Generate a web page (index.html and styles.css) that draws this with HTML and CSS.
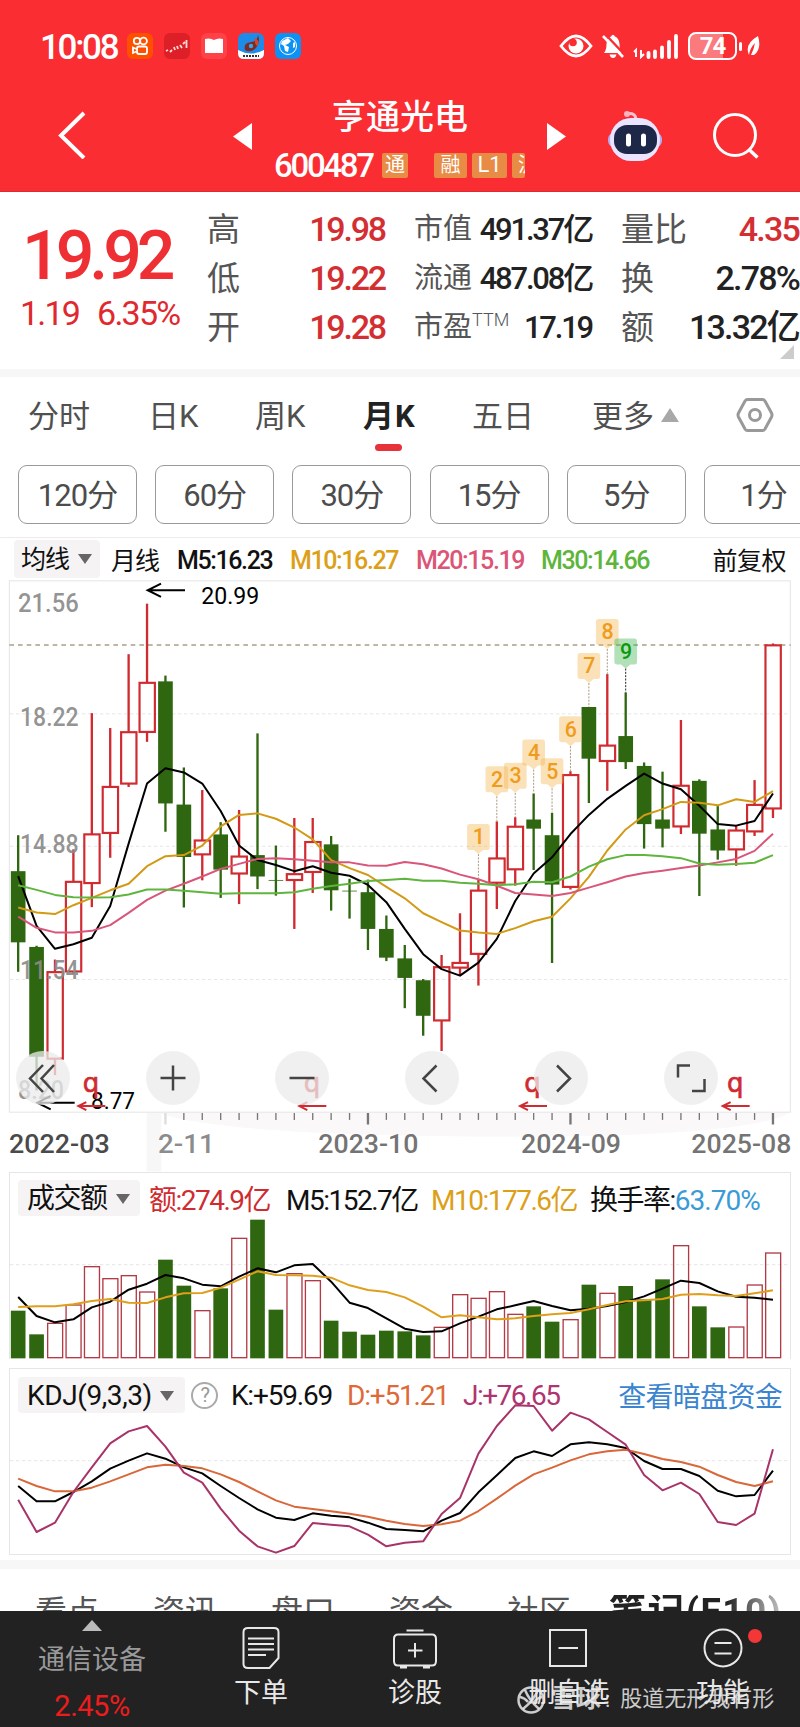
FILE: index.html
```html
<!DOCTYPE html>
<html lang="zh-CN">
<head>
    <meta charset="UTF-8">
    <meta name="viewport" content="width=device-width, initial-scale=1.0">
    <title>亨通光电 600487</title>
    <link rel="stylesheet" href="styles.css">
</head>
<body>

    <header>
        <div class="status-bar">
            <span class="clock">10:08</span>
            <div class="app-icons">
                <svg viewBox="0 0 26 26"><rect width="26" height="26" rx="6" fill="#ff5000"/><g fill="none" stroke="#fff" stroke-width="1.8"><circle cx="10" cy="8" r="3.2"/><circle cx="16.5" cy="8" r="3.4"/><rect x="10" y="13.500" width="10" height="7.500" rx="2"/><path d="M9.500 16 L6 14.500 V20 L9.500 18.500"/></g></svg>
                <svg viewBox="0 0 26 26"><rect width="26" height="26" rx="6" fill="#dd2027"/><path d="M2 18 L4 17 M6 19 L8 17 M10 14 L11 17 M13 13 L14 16 M16 12 L18 15 M19 11 L21 9 M22.500 7 V15" fill="none" stroke="#ffd9d9" stroke-width="1.800"/></svg>
                <svg viewBox="0 0 26 26"><rect width="26" height="26" rx="6" fill="#ff4148"/><path d="M4 6 Q9 4.500 13 7 Q17 4.500 22 6 V20 H4 Z" fill="#fff"/></svg>
                <svg viewBox="0 0 26 26"><rect width="26" height="26" rx="6" fill="#1f8be8"/><path d="M0 17 Q13 24 26 17 V20 Q26 26 20 26 H6 Q0 26 0 20 Z" fill="#fff"/><path d="M20 2 Q23 9 17 16 Q12 20 7 17 Q5 10 13 9 Q19 9 20 2" fill="#7c2c22"/><path d="M17 5 Q23 8 19 13 Q16 11 17 5" fill="#d9442e"/><circle cx="13" cy="13" r="2.200" fill="#35a5ee"/><path d="M5 23 H21" stroke="#333" stroke-width="2" stroke-dasharray="2 1"/></svg>
                <svg viewBox="0 0 26 26"><rect width="26" height="26" rx="6" fill="#0c92f5"/><circle cx="13" cy="13" r="8.500" fill="none" stroke="#fff" stroke-width="1"/><path d="M7 8 L13 5 L16 8 L13 11 L10 12 L14 14 L13 19 L10 18 L9 13 L6 11 Z M18 10 L20 9 L20 14 L18 15 Z" fill="#fff"/></svg>
            </div>
            <div class="sys-icons">
                <svg class="eye" viewBox="0 0 34 24"><path d="M2 12 Q17 -8 32 12 Q17 32 2 12 Z" fill="none" stroke="#fff" stroke-width="2.800"/><circle cx="17" cy="12" r="7.500" fill="#fff"/><circle cx="14" cy="8.500" r="3.800" fill="#fa2d33"/></svg>
                <svg class="bell" viewBox="0 0 22 26"><path d="M2 20 H20 Q17.500 17 17.500 11 Q17 5 13 3.500 Q11 0 9 3.500 Q4.500 5 4.500 11 Q4.500 17 2 20 Z M7.500 21.500 H14.500 Q13.500 25 11 25 Q8.500 25 7.500 21.500" fill="#fff"/><path d="M3 1 L23 22" stroke="#fa2d33" stroke-width="2.500"/><path d="M1 3 L21 24" stroke="#fff" stroke-width="2.600"/></svg>
                <svg class="signal" viewBox="0 0 46 26"><path d="M3 24 V17 L1 19 M8 17 V24 L11 21" fill="none" stroke="#fff" stroke-width="2"/><path d="M15.500 20 V24 M22 18.500 V24 M29 14.500 V24 M36 9 V24 M43 3 V24" stroke="#fff" stroke-width="3.800" stroke-linecap="round"/></svg>
                <div class="battery"><span>74</span></div>
                <svg class="leaf" viewBox="0 0 14 22"><path d="M12 1 Q16 14 8 20 L5 20 Q8 14 9 8 Q4 13 3 20 Q-2 9 12 1 Z" fill="#fff"/></svg>
            </div>
        </div>

        <div class="title-bar">
            <svg class="back" viewBox="0 0 28 48"><path d="M26 2 L3 24.500 L26 47" fill="none" stroke="#fff" stroke-width="4"/></svg>
            <svg class="tri" viewBox="0 0 19 27"><path d="M19 0 V27 L0 13.500 Z" fill="#fff"/></svg>
            <div class="stock">
                <div class="name">亨通光电</div>
                <div class="code-row">
                    <span class="code">600487</span>
                    <span class="mark first">通</span>
                    <span class="mark">融</span>
                    <span class="mark l1">L1</span>
                    <span class="mark cut">沪</span>
                </div>
            </div>
            <svg class="tri right" viewBox="0 0 19 27"><path d="M0 0 V27 L19 13.500 Z" fill="#fff"/></svg>
            <svg class="robot" viewBox="0 0 56 52">
                <path d="M20 4 Q28 2 29 9" fill="none" stroke="#ffc4d4" stroke-width="3"/>
                <circle cx="20" cy="4" r="3" fill="#ffb3c0"/>
                <rect x="1" y="23" width="54" height="14" rx="6" fill="#b9a8f2"/>
                <rect x="3" y="8" width="50" height="43" rx="21" fill="#e9e4ff"/>
                <rect x="7" y="15" width="43" height="29" rx="13" fill="#1d2848"/>
                <path d="M21.500 26 V34 M36.500 26 V34" stroke="#fff" stroke-width="5" stroke-linecap="round"/>
            </svg>
            <svg class="search" viewBox="0 0 46 46"><circle cx="22" cy="22" r="20.500" fill="none" stroke="#fff" stroke-width="3"/><path d="M36.500 37 L44.500 44.500" stroke="#fff" stroke-width="3.500"/></svg>
        </div>
    </header>

    <section class="quote">
        <div class="price">
            <div class="last">19.92</div>
            <div class="change"><span>1.19</span><span>6.35%</span></div>
        </div>
        <div class="col col-a">
            <div><label>高</label><b class="up">19.98</b></div>
            <div><label>低</label><b class="up">19.22</b></div>
            <div><label>开</label><b class="up">19.28</b></div>
        </div>
        <div class="col col-b">
            <div><label>市值</label><b>491.37亿</b></div>
            <div><label>流通</label><b>487.08亿</b></div>
            <div><label>市盈<sup>TTM</sup></label><b>17.19</b></div>
        </div>
        <div class="col col-c">
            <div><label>量比</label><b class="up">4.35</b></div>
            <div><label>换</label><b>2.78%</b></div>
            <div><label>额</label><b>13.32亿</b></div>
        </div>
        <i class="corner"></i>
    </section>

    <nav class="period">
        <span>分时</span>
        <span>日K</span>
        <span>周K</span>
        <span class="active">月K</span>
        <span>五日</span>
        <span>更多<i class="tri-up"></i></span>
        <svg viewBox="0 0 38 36"><path d="M11.500 2.500 H26.500 Q28 2.500 29 4 L35.500 16 Q36.500 18 35.500 20 L29 32 Q28 33.500 26.500 33.500 H11.500 Q10 33.500 9 32 L2.500 20 Q1.500 18 2.500 16 L9 4 Q10 2.500 11.500 2.500 Z" fill="none" stroke="#999" stroke-width="3"/><circle cx="19" cy="18" r="5.500" fill="none" stroke="#999" stroke-width="3"/></svg>
    </nav>

    <div class="minutes">
        <button>120分</button>
        <button>60分</button>
        <button>30分</button>
        <button>15分</button>
        <button>5分</button>
        <button>1分</button>
    </div>

    <div class="legend">
        <span class="select">均线<i class="tri-down"></i></span>
        <span class="type">月线</span>
        <span class="m5">M5:16.23</span>
        <span class="m10">M10:16.27</span>
        <span class="m20">M20:15.19</span>
        <span class="m30">M30:14.66</span>
        <span class="adjust">前复权</span>
    </div>

    <div class="main-chart">
        <!-- K线图 -->
        <svg id="kline" viewBox="0 30 2400 1776"></svg>
        <div class="tools">
            <button><svg viewBox="0 0 54 54"><path d="M27 14 L14 27.500 L27 41 M38 14 L25.500 27.500 L38 41"/></svg></button>
            <button><svg viewBox="0 0 54 54"><path d="M14.500 27 H39.500 M27 14.500 V39.500"/></svg></button>
            <button><svg viewBox="0 0 54 54"><path d="M14.500 27 H39.500"/></svg></button>
            <button><svg viewBox="0 0 54 54"><path d="M31.500 14.500 L18.500 27.500 L31.500 40.500"/></svg></button>
            <button><svg viewBox="0 0 54 54"><path d="M23 14.500 L36 27.500 L23 40.500"/></svg></button>
            <button><svg viewBox="0 0 54 54"><path d="M14 26.500 V14.500 H26 M28 40 H40.500 V28"/></svg></button>
        </div>
    </div>

    <div class="pane volume">
        <div class="pane-head">
            <span class="select">成交额<i class="tri-down"></i></span>
            <span class="amt">额:274.9亿</span>
            <span class="m5">M5:152.7亿</span>
            <span class="m10">M10:177.6亿</span>
            <span class="rate">换手率:<em>63.70%</em></span>
        </div>
        <svg id="vol" viewBox="27 38 2346 560"></svg>
    </div>

    <div class="pane kdj">
        <div class="pane-head">
            <span class="select">KDJ(9,3,3)<i class="tri-down"></i></span>
            <span class="help">?</span>
            <span class="k">K:+59.69</span>
            <span class="d">D:+51.21</span>
            <span class="j">J:+76.65</span>
            <span class="fund">查看暗盘资金</span>
        </div>
        <svg id="kdj" viewBox="27 24 2346 560"></svg>
    </div>

    <nav class="info-tabs">
        <span>看点</span>
        <span>资讯</span>
        <span>盘口</span>
        <span>资金</span>
        <span>社区</span>
        <span class="active">笔记(F10)</span>
    </nav>

    <footer>
        <div class="sector">
            <i class="tri-up"></i>
            <span>通信设备</span>
            <b>2.45%</b>
        </div>
        <div class="item">
            <svg viewBox="0 0 44 44"><path d="M9 2 H35 Q39.500 2 39.500 6 V32 L30.500 42 H9 Q4.500 42 4.500 38 V6 Q4.500 2 9 2 Z M9 12.500 H35 M9 18 H35 M9 23.500 H35 M9 29 H27"/></svg>
            <span>下单</span>
        </div>
        <div class="item">
            <svg viewBox="0 0 44 44"><path d="M5 8.500 H39 Q43 8.500 43 13 V35 Q43 39.500 39 39.500 H5 Q1 39.500 1 35 V13 Q1 8.500 5 8.500 Z M13.500 4.500 H30.500 M22 17 V31.500 M15 24.500 H29.500 M7 41.500 H14 M30 41.500 H37"/></svg>
            <span>诊股</span>
        </div>
        <div class="item">
            <svg viewBox="0 0 44 44"><path d="M3 4 H39 V40 H3 Z M11.500 22 H31"/></svg>
            <span>删自选</span>
        </div>
        <div class="item">
            <svg viewBox="0 0 44 44"><circle cx="22" cy="22" r="18.500"/><path d="M13.500 17 H30.500 M13.500 27.500 H30.500"/></svg>
            <span>功能</span>
            <i class="dot"></i>
        </div>
        <div class="watermark">
            <svg viewBox="0 0 28 28"><circle cx="14" cy="14" r="12.500"/><path d="M8 4 Q12 14 22 23 M21 4 Q17 14 6 23 M3 11 Q8 12 11 16 M25 11 Q20 12 17 16"/></svg>
            <span class="site">雪球</span><span class="sep">:</span><span>股道无形我有形</span>
        </div>
    </footer>

    <script>
        const RED = '#cf2b30';
        const GREEN = '#2f6610';
        const X0 = 54.5;
        const STEP = 55.23;
        const px = i => X0 + i * STEP;
        // K线图的纵向比例
        const py = y => +(y * 1.148).toFixed(1);

        // 最高, 实体上沿, 实体下沿, 最低, 涨跌
        const candles = [
            [693, 787, 973, 1050, 0], [982, 985, 1272, 1360, 0], [1018, 1050, 1278, 1320, 1], [730, 814, 1050, 1055, 1],
            [374, 690, 819, 881, 1], [413, 566, 688, 752, 1], [220, 423, 559, 567, 1], [88, 294, 424, 449, 1],
            [276, 291, 610, 684, 0], [516, 613, 750, 882, 0], [575, 706, 744, 811, 1], [659, 691, 783, 857, 0],
            [627, 748, 794, 873, 1], [427, 745, 801, 834, 0], [720, 810, 812, 851, 0], [648, 794, 811, 938, 1],
            [648, 710, 790, 844, 1], [695, 717, 837, 890, 0], [807, 838, 840, 911, 0], [809, 842, 938, 993, 0],
            [903, 938, 1013, 1022, 0], [980, 1015, 1066, 1145, 0], [1069, 1072, 1165, 1217, 0], [1006, 1037, 1178, 1257, 1],
            [897, 1026, 1040, 1060, 1], [810, 837, 1004, 1086, 1], [657, 753, 818, 886, 1], [646, 670, 783, 825, 1],
            [584, 652, 676, 784, 0], [635, 693, 822, 1027, 0], [526, 535, 829, 835, 1], [358, 358, 493, 609, 0],
            [272, 458, 500, 577, 1], [320, 434, 502, 520, 0], [503, 512, 664, 728, 0], [527, 652, 676, 725, 0],
            [392, 563, 671, 690, 1], [547, 551, 689, 852, 0], [617, 678, 733, 757, 0], [668, 680, 731, 773, 1],
            [549, 613, 684, 695, 1], [192, 196, 624, 648, 1]
        ];
        const ma5 = [800, 930, 990, 978, 961, 878, 715, 558, 518, 529, 558, 630, 720, 758, 771, 787, 774, 791, 799, 823, 868, 938, 1004, 1043, 1060, 1026, 964, 865, 793, 751, 690, 640, 598, 564, 532, 558, 573, 616, 664, 668, 656, 584];
        const ma10 = [882, 895, 899, 876, 857, 837, 820, 774, 748, 745, 720, 670, 640, 636, 650, 673, 704, 758, 779, 797, 828, 858, 897, 920, 942, 947, 951, 936, 918, 906, 858, 802, 733, 678, 641, 625, 606, 608, 615, 599, 606, 578];
        const ma20 = [906, 935, 947, 947, 943, 928, 896, 862, 838, 820, 801, 781, 768, 755, 753, 756, 760, 764, 764, 772, 773, 763, 769, 780, 796, 808, 825, 844, 848, 852, 844, 830, 816, 801, 792, 786, 779, 772, 764, 755, 734, 689];
        const ma30 = [824, 836, 849, 855, 856, 855, 848, 835, 835, 838, 842, 846, 845, 845, 845, 842, 833, 826, 820, 813, 810, 807, 812, 812, 817, 820, 824, 821, 815, 816, 801, 775, 756, 745, 745, 748, 753, 767, 770, 768, 765, 745];

        const volTop = [454, 525, 492, 437, 322, 358, 349, 398, 301, 379, 454, 387, 237, 181, 451, 343, 364, 484, 517, 526, 514, 516, 528, 504, 406, 417, 397, 465, 441, 487, 481, 376, 402, 380, 420, 360, 259, 441, 504, 503, 377, 281];
        const vol5 = [413, 470, 489, 480, 444, 427, 391, 373, 347, 357, 376, 381, 352, 327, 339, 318, 314, 367, 430, 446, 477, 508, 518, 516, 492, 472, 450, 438, 425, 440, 453, 448, 440, 428, 411, 388, 364, 371, 396, 412, 415, 421];
        const vol10 = [443, 441, 441, 435, 425, 419, 430, 431, 414, 402, 401, 385, 361, 336, 347, 348, 349, 355, 378, 392, 398, 414, 442, 474, 468, 474, 480, 477, 470, 465, 461, 450, 437, 426, 423, 419, 406, 404, 408, 410, 402, 393];

        const kLine = [378, 424, 424, 396, 364, 326, 302, 280, 296, 322, 340, 378, 414, 448, 473, 480, 460, 467, 472, 488, 507, 510, 514, 482, 459, 397, 346, 294, 274, 288, 253, 247, 253, 264, 303, 327, 327, 348, 392, 409, 405, 332];
        const dLine = [356, 378, 394, 394, 383, 364, 343, 322, 314, 318, 325, 343, 366, 394, 421, 440, 447, 454, 461, 470, 482, 492, 498, 493, 482, 453, 416, 377, 343, 323, 301, 283, 274, 269, 282, 297, 306, 320, 345, 366, 378, 364];
        const jLine = [419, 516, 488, 396, 322, 250, 214, 198, 260, 338, 368, 446, 512, 559, 578, 558, 489, 494, 499, 524, 559, 548, 544, 462, 414, 281, 198, 136, 138, 212, 158, 178, 216, 254, 345, 391, 368, 402, 486, 495, 461, 268];

        function line(x1, y1, x2, y2, color, width, dash) {
            return `<line x1="${x1}" y1="${y1}" x2="${x2}" y2="${y2}" stroke="${color}" stroke-width="${width}"${dash ? ` stroke-dasharray="${dash}"` : ''}/>`;
        }

        function poly(data, color, width = 5) {
            return `<polyline points="${data.map((y, i) => px(i) + ',' + y).join(' ')}" fill="none" stroke="${color}" stroke-width="${width}" stroke-linejoin="round"/>`;
        }

        function label(text, x, y, width, size, color, extra = '') {
            return `<text x="${x}" y="${y}" font-size="${size}" fill="${color}" textLength="${width}" lengthAdjust="spacingAndGlyphs" ${extra}>${text}</text>`;
        }

        function arrow(x1, x2, y, color, head, width) {
            return `<path d="M${x2} ${y} H${x1} M${x1 + head * 2} ${y - head} L${x1} ${y} L${x1 + head * 2} ${y + head}" fill="none" stroke="${color}" stroke-width="${width}"/>`;
        }

        function drawKline() {
            let s = '';
            // 坐标轴下方的浅色底
            s += '<rect x="440" y="1628" width="44" height="176" fill="#f7f7f8"/>';
            s += '<path d="M484 1628 H2370 Q2250 1695 1600 1700 Q700 1700 484 1632 Z" fill="#faf8f8"/>';
            s += '<rect x="28" y="32.500" width="2343" height="1594" fill="none" stroke="#e4e4e4" stroke-width="3"/>';
            [376, 722, 1070].forEach(y => s += line(30, py(y), 2370, py(y), '#e6e6e6', 3, '10 8'));
            s += line(28, py(196), 2372, py(196), '#a9a184', 5, '14 12');

            candles.forEach((row, i) => {
                const [h, t, b, l] = row.slice(0, 4).map(py);
                const x = px(i);
                const c = row[4] ? RED : GREEN;
                if (row[4]) {
                    s += line(x, h, x, t, c, 7) + line(x, b, x, l, c, 7);
                    s += `<rect x="${x - 22.5}" y="${t + 1}" width="46" height="${b - t - 2}" fill="none" stroke="${c}" stroke-width="6.500"/>`;
                } else {
                    s += line(x, h, x, l, c, 7);
                    s += `<rect x="${x - 22}" y="${t}" width="44" height="${b - t}" fill="${c}"/>`;
                }
            });

            s += poly(ma5.map(py), '#000', 6) + poly(ma10.map(py), '#d29a15', 6) + poly(ma20.map(py), '#d9567a', 6) + poly(ma30.map(py), '#5fb53d', 6);

            [['21.56', 111, 182], ['18.22', 407, 176], ['14.88', 739, 176], ['11.54', 1068, 176], ['8.20', 1382, 138]].forEach(([t, y, w]) => {
                s += label(t, w === 176 ? 60 : 54, py(y), w, 78, '#8a8a8a', 'fill-opacity=".92" font-weight="500"');
            });
            s += label('20.99', 604, py(89), 174, 70, '#000');
            s += arrow(443, 555, py(53), '#000', 20, 6);
            s += arrow(112, 224, py(1392), '#000', 20, 6);
            s += label('8.77', 273, py(1408), 132, 70, '#000');

            // 九转序列
            [664, 513, 504, 443, 492, 382, 217, 128, 179].forEach((top, n) => {
                const i = 25 + n;
                const x = px(i);
                const y = py(top);
                const last = n === 8;
                s += line(x, y + 90, x, py(candles[i][0]), last ? '#222' : '#a89a80', 3, '6 4');
                s += `<path d="M${x - 26} ${y} H${x + 26} Q${x + 34} ${y} ${x + 34} ${y + 8} V${y + 70} Q${x + 34} ${y + 78} ${x + 26} ${y + 78} H${x + 14} L${x} ${y + 90} L${x - 14} ${y + 78} H${x - 26} Q${x - 34} ${y + 78} ${x - 34} ${y + 70} V${y + 8} Q${x - 34} ${y} ${x - 26} ${y} Z" fill="${last ? '#3db24f' : '#f5b44a'}" fill-opacity=".4"/>`;
                s += `<text x="${x + 1}" y="${y + 61}" font-size="64" font-weight="500" text-anchor="middle" fill="${last ? '#0b9a0b' : '#ef9c1c'}">${n + 1}</text>`;
            });

            [235, 898, 1560, 2168].forEach(x => {
                s += `<text x="${x + 13}" y="${py(1364)}" class="q">q</text>`;
                s += arrow(x, x + 81, py(1401), RED, 12, 6);
            });

            for (let i = 8; i < 42; i++) {
                const major = (i - 8) % 11 === 0;
                s += line(px(i), py(1419), px(i), py(major ? 1449 : 1437), i === 8 ? '#ddd' : '#777', major ? 7 : 4);
            }
            s += label('2022-03', 27, py(1523), 302, 76, '#4a4a4a', 'font-weight="500"');
            s += label('2-11', 474, py(1523), 170, 76, '#8c8c8c', 'font-weight="500"');
            s += label('2023-10', 955, py(1523), 300, 76, '#747474', 'font-weight="500"');
            s += label('2024-09', 1563, py(1523), 300, 76, '#747474', 'font-weight="500"');
            s += label('2025-08', 2074, py(1523), 300, 76, '#747474', 'font-weight="500"');
            document.getElementById('kline').innerHTML = s;
        }

        function drawVolume() {
            let s = line(30, 316, 2370, 316, '#e6e6e6', 3, '10 8');
            volTop.forEach((y, i) => {
                const x = px(i);
                if (candles[i][4]) {
                    s += `<rect x="${x - 22}" y="${y}" width="45" height="${595 - y}" fill="none" stroke="#b23a44" stroke-width="4"/>`;
                } else {
                    s += `<rect x="${x - 22}" y="${y}" width="44" height="${597 - y}" fill="${GREEN}"/>`;
                }
            });
            s += poly(vol5, '#000', 6) + poly(vol10, '#dea01c', 6);
            document.getElementById('vol').innerHTML = s;
        }

        function drawKdj() {
            document.getElementById('kdj').innerHTML = line(30, 302, 2370, 302, '#e6e6e6', 3, '10 8')
                + poly(kLine, '#000', 6) + poly(dLine, '#d9673a', 6) + poly(jLine, '#a83368', 6);
        }

        drawKline();
        drawVolume();
        drawKdj();
    </script>

</body>
</html>
```
FILE: styles.css
```css
* {
    box-sizing: border-box;
}

body {
    margin: 0;
    width: 800px;
    height: 1727px;
    overflow: hidden;
    background-color: #fff;
    color: #222;
    font-family: Roboto, "Noto Sans CJK SC", sans-serif;
}

svg {
    display: block;
    flex: none;
}

i, em {
    font-style: normal;
}

button {
    font-family: inherit;
    padding: 0;
}

header {
    height: 192px;
    background-color: #fa2d33;
    color: #fff;
    border-bottom: 1px solid #d92c33;
}

.status-bar {
    display: flex;
    align-items: center;
    height: 92px;
    padding: 0 40px;
}

.clock {
    width: 87px;
    padding-top: 2px;
    font-size: 35px;
    font-weight: 500;
    letter-spacing: -2.300px;
}

.app-icons {
    display: flex;
    gap: 11px;
}

.app-icons svg {
    width: 26px;
    height: 26px;
}

.sys-icons {
    display: flex;
    align-items: center;
    margin-left: auto;
}

.eye {
    width: 34px;
    height: 24px;
}

.bell {
    width: 22px;
    height: 26px;
    margin-left: 9px;
}

.signal {
    width: 46px;
    height: 26px;
    margin-left: 9px;
}

.battery {
    position: relative;
    width: 49px;
    height: 28px;
    margin: 0 13px 0 9px;
    border: 2px solid #fff;
    border-radius: 8px;
    background: linear-gradient(to right, #fb7a7e 74%, transparent 74%);
    text-align: center;
    font-size: 24px;
    font-weight: 700;
    line-height: 25px;
    letter-spacing: -1px;
}

.battery::after {
    content: "";
    position: absolute;
    right: -7px;
    top: 8px;
    width: 3px;
    height: 9px;
    border-radius: 2px;
    background-color: #fff;
}

.leaf {
    width: 14px;
    height: 22px;
    margin-left: -4px;
}

.title-bar {
    display: flex;
    height: 100px;
    padding-left: 58px;
}

.back {
    width: 28px;
    height: 48px;
    margin-top: 19px;
}

.tri {
    width: 19px;
    height: 27px;
    margin: 31px 0 0 147px;
}

.stock {
    width: 250px;
    margin-left: 23px;
}

.name {
    height: 50px;
    line-height: 51px;
    text-align: center;
    font-size: 34px;
    font-weight: 500;
}

.code-row {
    display: flex;
    align-items: center;
    height: 46px;
    overflow: hidden;
}

.code {
    width: 107px;
    font-size: 33px;
    font-weight: 500;
    letter-spacing: -2.300px;
    text-indent: -1px;
}

.mark {
    flex: none;
    width: 33px;
    height: 25px;
    margin-right: 5px;
    border-radius: 2px;
    background-color: #e88b45;
    text-align: center;
    font-size: 20px;
    line-height: 24px;
}

.mark.first {
    width: 26px;
    margin-right: 26px;
}

.mark.l1 {
    width: 35px;
    font-size: 22px;
}

.mark.cut {
    width: 13px;
    margin-right: 0;
    padding-left: 6px;
    overflow: hidden;
    text-align: left;
}

.tri.right {
    margin-left: 22px;
}

.robot {
    width: 56px;
    height: 52px;
    margin: 18px 0 0 41px;
}

.search {
    width: 46px;
    height: 46px;
    margin: 21px 0 0 50px;
}

.quote {
    position: relative;
    display: flex;
    height: 185px;
    padding-top: 13px;
    border-bottom: 8px solid #f7f7f7;
}

.price {
    width: 207px;
    color: #e0282e;
}

.last {
    padding: 17px 0 0 22px;
    font-size: 68px;
    line-height: 68px;
    font-weight: 500;
    letter-spacing: -5px;
    color: #ee2f33;
}

.change {
    display: flex;
    gap: 18px;
    padding: 6px 0 0 20px;
    font-size: 34px;
    line-height: 34px;
    letter-spacing: -1.800px;
}

.col > div {
    display: flex;
    justify-content: space-between;
    align-items: center;
    height: 49px;
    white-space: nowrap;
}

.col label {
    color: #555;
    font-size: 33px;
    line-height: 49px;
}

.col b {
    font-size: 34px;
    font-weight: 500;
    line-height: 49px;
    letter-spacing: -2.2px;
}

.col b.up {
    color: #d32f33;
}

.col-a {
    width: 178px;
}

.col-b {
    width: 178px;
    margin-left: 29px;
}

.col-b label {
    font-size: 29px;
}

.col-b b {
    font-size: 31px;
    letter-spacing: -2.200px;
}

.col sup {
    font-size: 18px;
    line-height: 0;
    font-weight: 300;
}

.col-c {
    width: 178px;
    margin-left: 29px;
}

.col-c b {
    letter-spacing: -1.800px;
}

.corner {
    position: absolute;
    right: 6px;
    bottom: 10px;
    border: 7px solid transparent;
    border-right-color: #ccc;
    border-bottom-color: #ccc;
}

.period {
    display: flex;
    align-items: center;
    height: 78px;
    padding: 0 0 6px 28px;
    font-size: 31px;
    color: #505050;
}

.period span {
    position: relative;
    width: 120px;
    white-space: nowrap;
}

.period span:nth-child(2) {
    width: 107px;
}

.period span:nth-child(3) {
    width: 108px;
}

.period span:nth-child(4) {
    width: 109px;
}

.period span:nth-child(6) {
    width: 144px;
}

.period .active {
    font-weight: 700;
    color: #222;
    letter-spacing: 1px;
}

.period .active::after {
    content: "";
    position: absolute;
    left: 12px;
    bottom: -15px;
    width: 27px;
    height: 7px;
    border-radius: 4px;
    background-color: #e63238;
}

.tri-up {
    display: inline-block;
    border: 9px solid transparent;
    border-top: 0;
    border-bottom: 14px solid #a8a8a8;
}

.period .tri-up {
    margin: 0 0 5px 7px;
}

.period svg {
    width: 38px;
    height: 36px;
    margin-top: 4px;
}

.minutes {
    display: flex;
    gap: 18.2px;
    height: 83px;
    padding: 10px 0 0 18px;
    overflow: hidden;
    border-bottom: 1px solid #ececec;
}

.minutes button {
    flex: none;
    width: 119px;
    height: 59px;
    padding-bottom: 4px;
    border: 1px solid #999;
    border-radius: 9px;
    background-color: #fff;
    color: #4c4c4c;
    font-size: 31px;
    letter-spacing: -1px;
}

.legend {
    display: flex;
    align-items: center;
    height: 42px;
    padding-left: 14px;
    color: #111;
    font-size: 25px;
    white-space: nowrap;
}

.legend span {
    padding-top: 2px;
    letter-spacing: -1.300px;
}

.legend .select {
    width: 86px;
    height: 38px;
    padding: 0 0 0 7px;
    border-radius: 4px;
    background-color: #f6f3f4;
    line-height: 40px;
    letter-spacing: -1px;
}

.tri-down {
    display: inline-block;
    border: 7px solid transparent;
    border-bottom: 0;
    border-top: 10px solid #666;
    margin: 0 0 4px 9px;
}

.legend .type {
    width: 67px;
    padding: 0 0 0 11px;
    letter-spacing: -1px;
}

.legend .m5 {
    width: 123px;
    padding-left: 10px;
}

.legend .m10 {
    width: 126px;
}

.legend .m20 {
    width: 125px;
}

.legend .m5, .legend .m10, .legend .m20, .legend .m30 {
    font-weight: 500;
    letter-spacing: -1.400px;
}

.m5 {
    color: #111;
}

.m10 {
    color: #dca018;
}

.m20 {
    color: #dc5476;
}

.m30 {
    color: #5eb53c;
}

.legend .adjust {
    margin-left: auto;
    margin-right: 14px;
    padding-top: 0;
    letter-spacing: -.500px;
}

.main-chart {
    position: relative;
    height: 592px;
}

.main-chart > svg {
    width: 800px;
    height: 592px;
}

.q {
    fill: #cf2b30;
    font-family: "DejaVu Sans", sans-serif;
    font-size: 78px;
    stroke: #cf2b30;
    stroke-width: 2;
}

.tools {
    position: absolute;
    left: 16px;
    top: 471px;
    display: flex;
    gap: 75.600px;
}

.tools button {
    width: 54px;
    height: 54px;
    border: 0;
    border-radius: 50%;
    background-color: rgba(235, 235, 235, .76);
}

.tools svg {
    fill: none;
    stroke: #444;
    stroke-width: 2.500;
}

.pane {
    position: relative;
    width: 782px;
    height: 187px;
    margin: 0 9px 9px;
    border: 1px solid #e6e6e6;
}

.pane > svg {
    width: 782px;
    height: 186.700px;
    margin: -1px 0 0 -1px;
}

.pane-head {
    position: absolute;
    left: 8px;
    right: 8px;
    top: 8px;
    display: flex;
    align-items: center;
    height: 36px;
    font-size: 28px;
    white-space: nowrap;
    letter-spacing: -1.500px;
    color: #111;
}

.pane-head .select {
    height: 36px;
    padding-left: 9px;
    border-radius: 4px;
    background-color: #f6f3f4;
    line-height: 37px;
}

.volume .pane-head {
    top: 7px;
}

.volume .select {
    width: 122px;
    margin-right: 9px;
}

.volume {
    border-bottom: 0;
}

.amt {
    width: 137px;
    color: #cf2b30;
}

.volume .m5 {
    width: 145px;
}

.volume .m10 {
    width: 159px;
}

.rate em {
    color: #3a9bd6;
    letter-spacing: -1px;
}

.kdj .select {
    width: 167px;
    margin-right: 6px;
    letter-spacing: -.400px;
}

.kdj .tri-down {
    margin-left: 8px;
}

.help {
    width: 27px;
    height: 27px;
    margin-right: 13px;
    border: 2px solid #aaa;
    border-radius: 50%;
    color: #999;
    font-size: 20px;
    line-height: 23px;
    text-align: center;
}

.k {
    width: 116px;
    letter-spacing: -1.200px;
}

.d {
    width: 116px;
    color: #de6a38;
    letter-spacing: -1.200px;
}

.j {
    color: #b03470;
}

.fund {
    margin-left: auto;
    color: #3b84d0;
    letter-spacing: -.700px;
}

.info-tabs {
    display: flex;
    height: 51px;
    margin-top: -4px;
    padding: 26px 0 0 35px;
    border-top: 9px solid #f7f7f7;
    overflow: hidden;
    color: #555;
    font-size: 32px;
    line-height: 34px;
    white-space: nowrap;
}

.info-tabs span {
    flex: none;
    width: 118px;
}

.info-tabs span:nth-child(5) {
    width: 102px;
}

.info-tabs .active {
    width: 180px;
    font-size: 37px;
    font-weight: 700;
    letter-spacing: 1.500px;
    color: #222;
    -webkit-mask-image: linear-gradient(to right, #000 65%, rgba(0, 0, 0, .3) 95%);
    mask-image: linear-gradient(to right, #000 65%, rgba(0, 0, 0, .3) 95%);
}

footer {
    position: relative;
    display: flex;
    height: 116px;
    background-color: #222;
    color: #e8e8e8;
}

.sector {
    display: flex;
    flex-direction: column;
    align-items: center;
    width: 184px;
    padding-top: 9px;
}

.sector .tri-up {
    border-width: 0 10px 11px;
    border-bottom-color: #bbb;
}

.sector span {
    margin-top: 11px;
    color: #999;
    font-size: 27px;
    line-height: 36px;
}

.sector b {
    margin-top: 10px;
    color: #ee1c1c;
    font-size: 29px;
    font-weight: 400;
    line-height: 36px;
    letter-spacing: -.500px;
}

.item {
    position: relative;
    display: flex;
    flex-direction: column;
    align-items: center;
    width: 154px;
    padding-top: 15px;
}

.item svg {
    width: 44px;
    height: 44px;
    fill: none;
    stroke: #e8e8e8;
    stroke-width: 2;
}

.item span {
    margin-top: 4px;
    font-size: 27px;
    line-height: 38px;
}

.dot {
    position: absolute;
    right: 38px;
    top: 18px;
    width: 14px;
    height: 14px;
    border-radius: 50%;
    background-color: #f33636;
}

.watermark {
    position: absolute;
    left: 517px;
    top: 73px;
    display: flex;
    align-items: center;
    height: 32px;
    color: rgba(235, 235, 235, .85);
    font-size: 22px;
    line-height: 30px;
    white-space: nowrap;
}

.watermark span {
    margin-top: -2px;
}

.watermark svg {
    width: 28px;
    height: 28px;
    fill: none;
    stroke: rgba(235, 235, 235, .85);
    stroke-width: 2.500;
}

.watermark .site {
    margin-left: 6px;
    font-size: 25px;
    font-weight: 700;
}

.watermark .sep {
    margin: 0 10px 0 4px;
}
```
